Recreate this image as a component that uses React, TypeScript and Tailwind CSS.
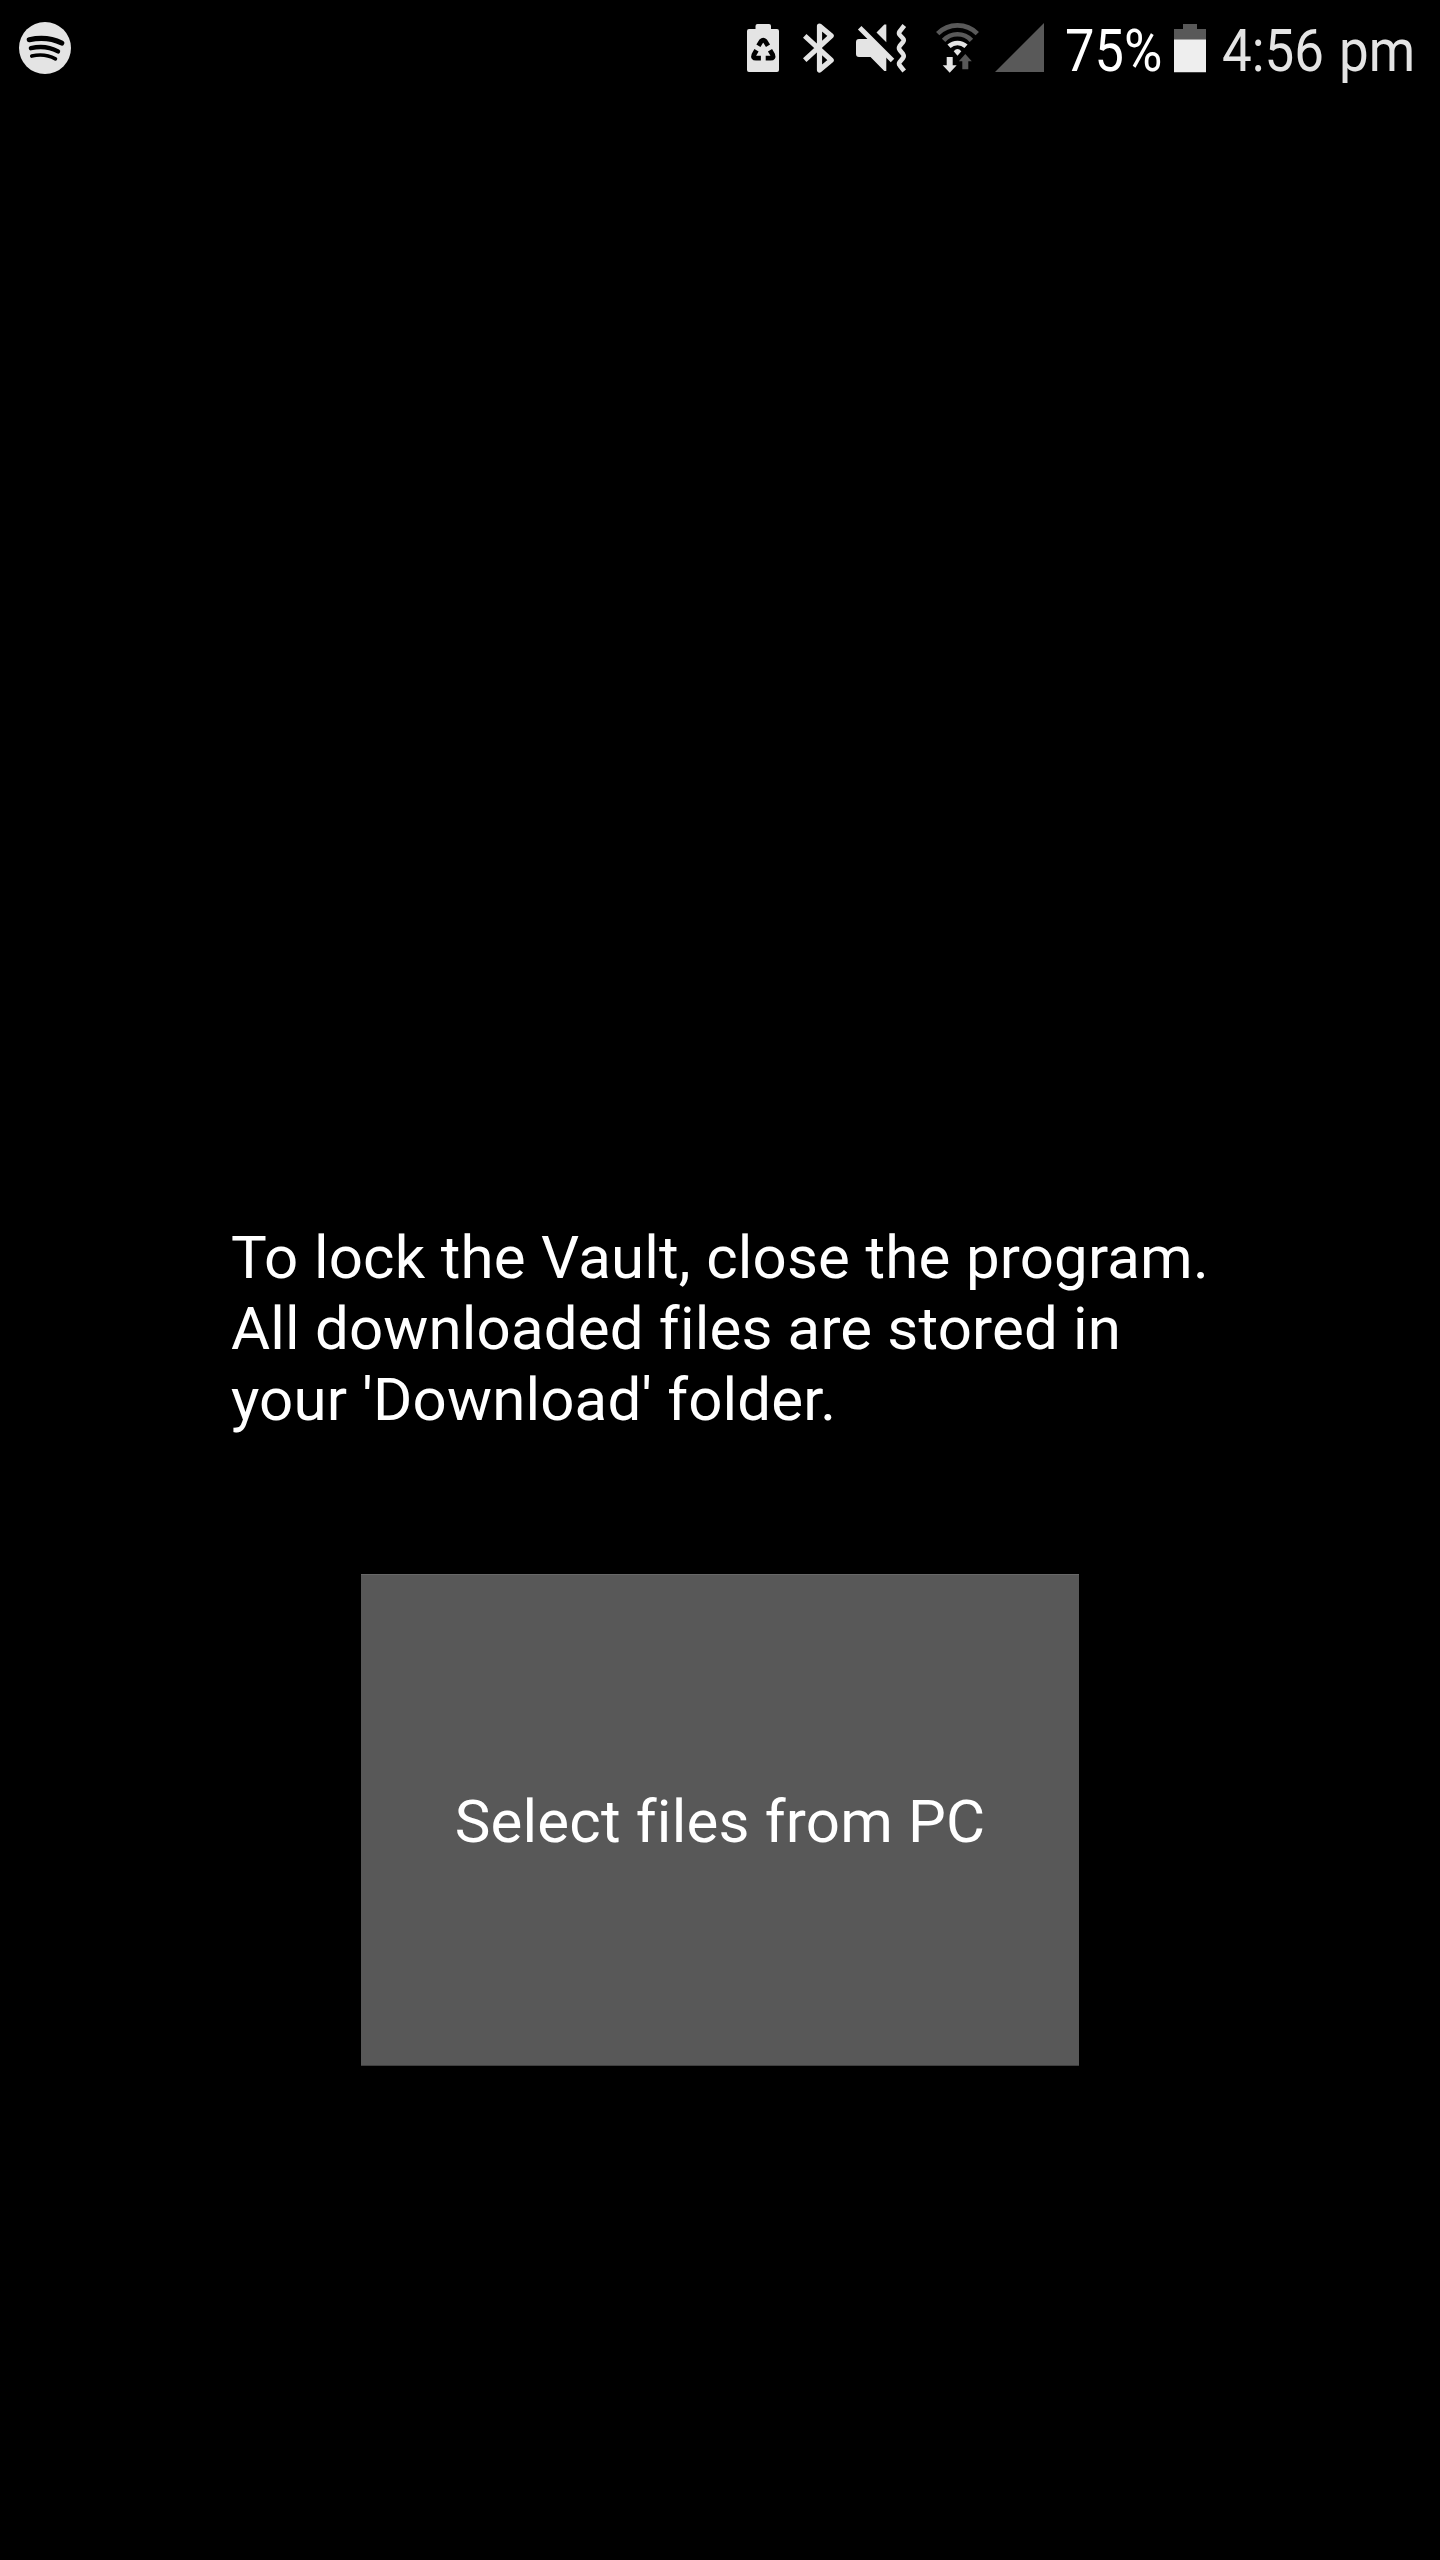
import type { ReactNode } from "react";

type GlyphProps = { box: string; className: string; label: string; children: ReactNode };

function Glyph({ box, className, label, children }: GlyphProps) {
  return (
    <svg viewBox={box} className={`shrink-0 ${className}`} fill="currentColor" role="img" aria-label={label}>
      {children}
    </svg>
  );
}

function SpotifyIcon() {
  return (
    <Glyph box="0 0 52 52" className="ml-[19px] h-[52px] w-[52px]" label="Spotify">
      <circle cx="26" cy="26" r="26" />
      <g fill="none" stroke="#000" strokeLinecap="round">
        <path d="M10.300 17.700c11-2.300 23-1.300 32.400 3.300" strokeWidth="5.200" />
        <path d="M11.900 26.200c9.500-2.400 19-1.200 27.100 3.200" strokeWidth="4.400" />
        <path d="M12.800 34c8.300-1.900 16.500-1 23.600 2.800" strokeWidth="3.700" />
      </g>
    </Glyph>
  );
}

function BatterySaverIcon() {
  return (
    <Glyph box="0 0 32 50" className="h-[50px] w-8" label="Battery saver">
      <path d="M10.500 1h11.500q2 0 2 2v3h6q2 0 2 2v39q0 2-2 2H2q-2 0-2-2V8q0-2 2-2h6.500V3q0-2 2-2Z" />
      <g fill="none" stroke="#000" strokeWidth="4.800">
        <path d="M11.400 22.700 14.200 18.200Q16.200 16.200 18.200 18.200L21 22.700" />
        <path d="M9.500 27.300 6.900 31.900Q5.600 35.200 9 35.200H13.900" />
        <path d="M23 27.300 25.700 31.900Q27 35.200 23.600 35.200H18.700" />
      </g>
    </Glyph>
  );
}

function BluetoothIcon() {
  return (
    <Glyph box="0 0 32 50" className="ml-6 h-[50px] w-8" label="Bluetooth">
      <path
        d="M1.700 12.800 28.200 37.200 16.500 47V3L28.200 12.800 1.700 37.200"
        fill="none"
        stroke="currentColor"
        strokeWidth="5.200"
        strokeLinejoin="round"
      />
    </Glyph>
  );
}

function MutedVibrateIcon() {
  return (
    <Glyph box="0 0 51 50" className="ml-[21px] h-[50px] w-[51px]" label="Sound off, vibrate">
      <path d="M3 16h10L30.300 32v16h-2L14.500 34H3q-3 0-3-3V19q0-3 3-3Z" />
      <path d="M28.300 1.500h2V19.300L20.500 9.500Z" />
      <path d="M3.700 4.700 36.500 37.500" fill="none" stroke="currentColor" strokeWidth="5" />
      <path
        d="M48.300 2.500 43.600 8.500Q42.400 10.500 43.800 12L47 15.500Q48.400 17.200 47 19L43.700 23Q42.300 25 43.700 27L47 31Q48.400 33 47 35L43.700 39Q42.400 41 43.800 42.500L48.200 48"
        fill="none"
        stroke="currentColor"
        strokeWidth="4.600"
      />
    </Glyph>
  );
}

function WifiIcon() {
  return (
    <Glyph box="0 0 44 52" className="ml-[29px] h-[52px] w-11" label="Wi-Fi">
      <g fill="none" strokeWidth="4.700">
        <path d="M1.700 11.600a28 28 0 0 1 39.600 0" stroke="#595959" />
        <path d="M7.600 18.300a19 19 0 0 1 27.800 0" stroke="#595959" />
        <path d="M13 24.300a12.600 12.600 0 0 1 17 0" stroke="currentColor" />
      </g>
      <path d="M17.700 29.300q3.800-4.600 7.600 0L21.500 33.700Z" />
      <path d="M10.700 35h6v8.300h4L13.700 50.700 6.700 43.300h4Z" />
      <path d="M29.300 32 35.800 39.200h-3.500V47.200h-6v-8h-3.500Z" fill="#595959" />
    </Glyph>
  );
}

function SignalIcon() {
  return (
    <Glyph box="0 0 49 50" className="ml-[15px] h-[50px] w-[49px] text-[#595959]" label="Signal">
      <path d="M49 0v49H0Z" />
    </Glyph>
  );
}

function BatteryIcon() {
  return (
    <Glyph box="0 0 32 50" className="ml-3.5 h-[50px] w-8" label="Battery">
      <path d="M9 1h14v5h9v11H0V6h9Z" fill="#595959" />
      <path d="M0 16.500h32V49.300H0Z" fill="#eeeeee" />
    </Glyph>
  );
}

function StatusBar() {
  return (
    <header className="flex h-24 items-center text-[#e4e4e4]">
      <SpotifyIcon />
      <div className="ml-auto flex h-[76px] items-center">
        <BatterySaverIcon />
        <BluetoothIcon />
        <MutedVibrateIcon />
        <WifiIcon />
        <SignalIcon />
        <div className="ml-[21px] w-[95px] pt-1.5 text-[60px] leading-[70px] whitespace-nowrap text-white">
          <span className="inline-block origin-left scale-x-[0.873]">75%</span>
        </div>
        <BatteryIcon />
        <div className="ml-[16px] w-[218px] pt-1.5 text-[60px] leading-[70px] whitespace-nowrap">
          <span className="inline-block origin-left scale-x-[0.882] [word-spacing:2px]">4:56 pm</span>
        </div>
      </div>
    </header>
  );
}

export default function App() {
  return (
    <div className="flex h-[2560px] w-[1440px] flex-col overflow-hidden bg-black font-['Roboto',sans-serif] text-white">
      <StatusBar />
      <main className="flex flex-col items-center pt-[1126px]">
        <p className="w-[978px] text-[60px] leading-[71px] tracking-[0.17px] whitespace-nowrap">
          <span className="[word-spacing:0.4px]">To lock the Vault, close the program.</span>
          <br />
          All downloaded files are stored in
          <br />
          your &apos;Download&apos; folder.
        </p>
        <button
          type="button"
          className="mt-[139px] flex h-[492px] w-[718px] items-center justify-center border-t border-b border-t-[#686868] border-b-[#3f3f3f] bg-[#585858] pt-0.5 text-[60px] leading-[71px] tracking-[0.2px]"
        >
          Select files from PC
        </button>
      </main>
    </div>
  );
}
